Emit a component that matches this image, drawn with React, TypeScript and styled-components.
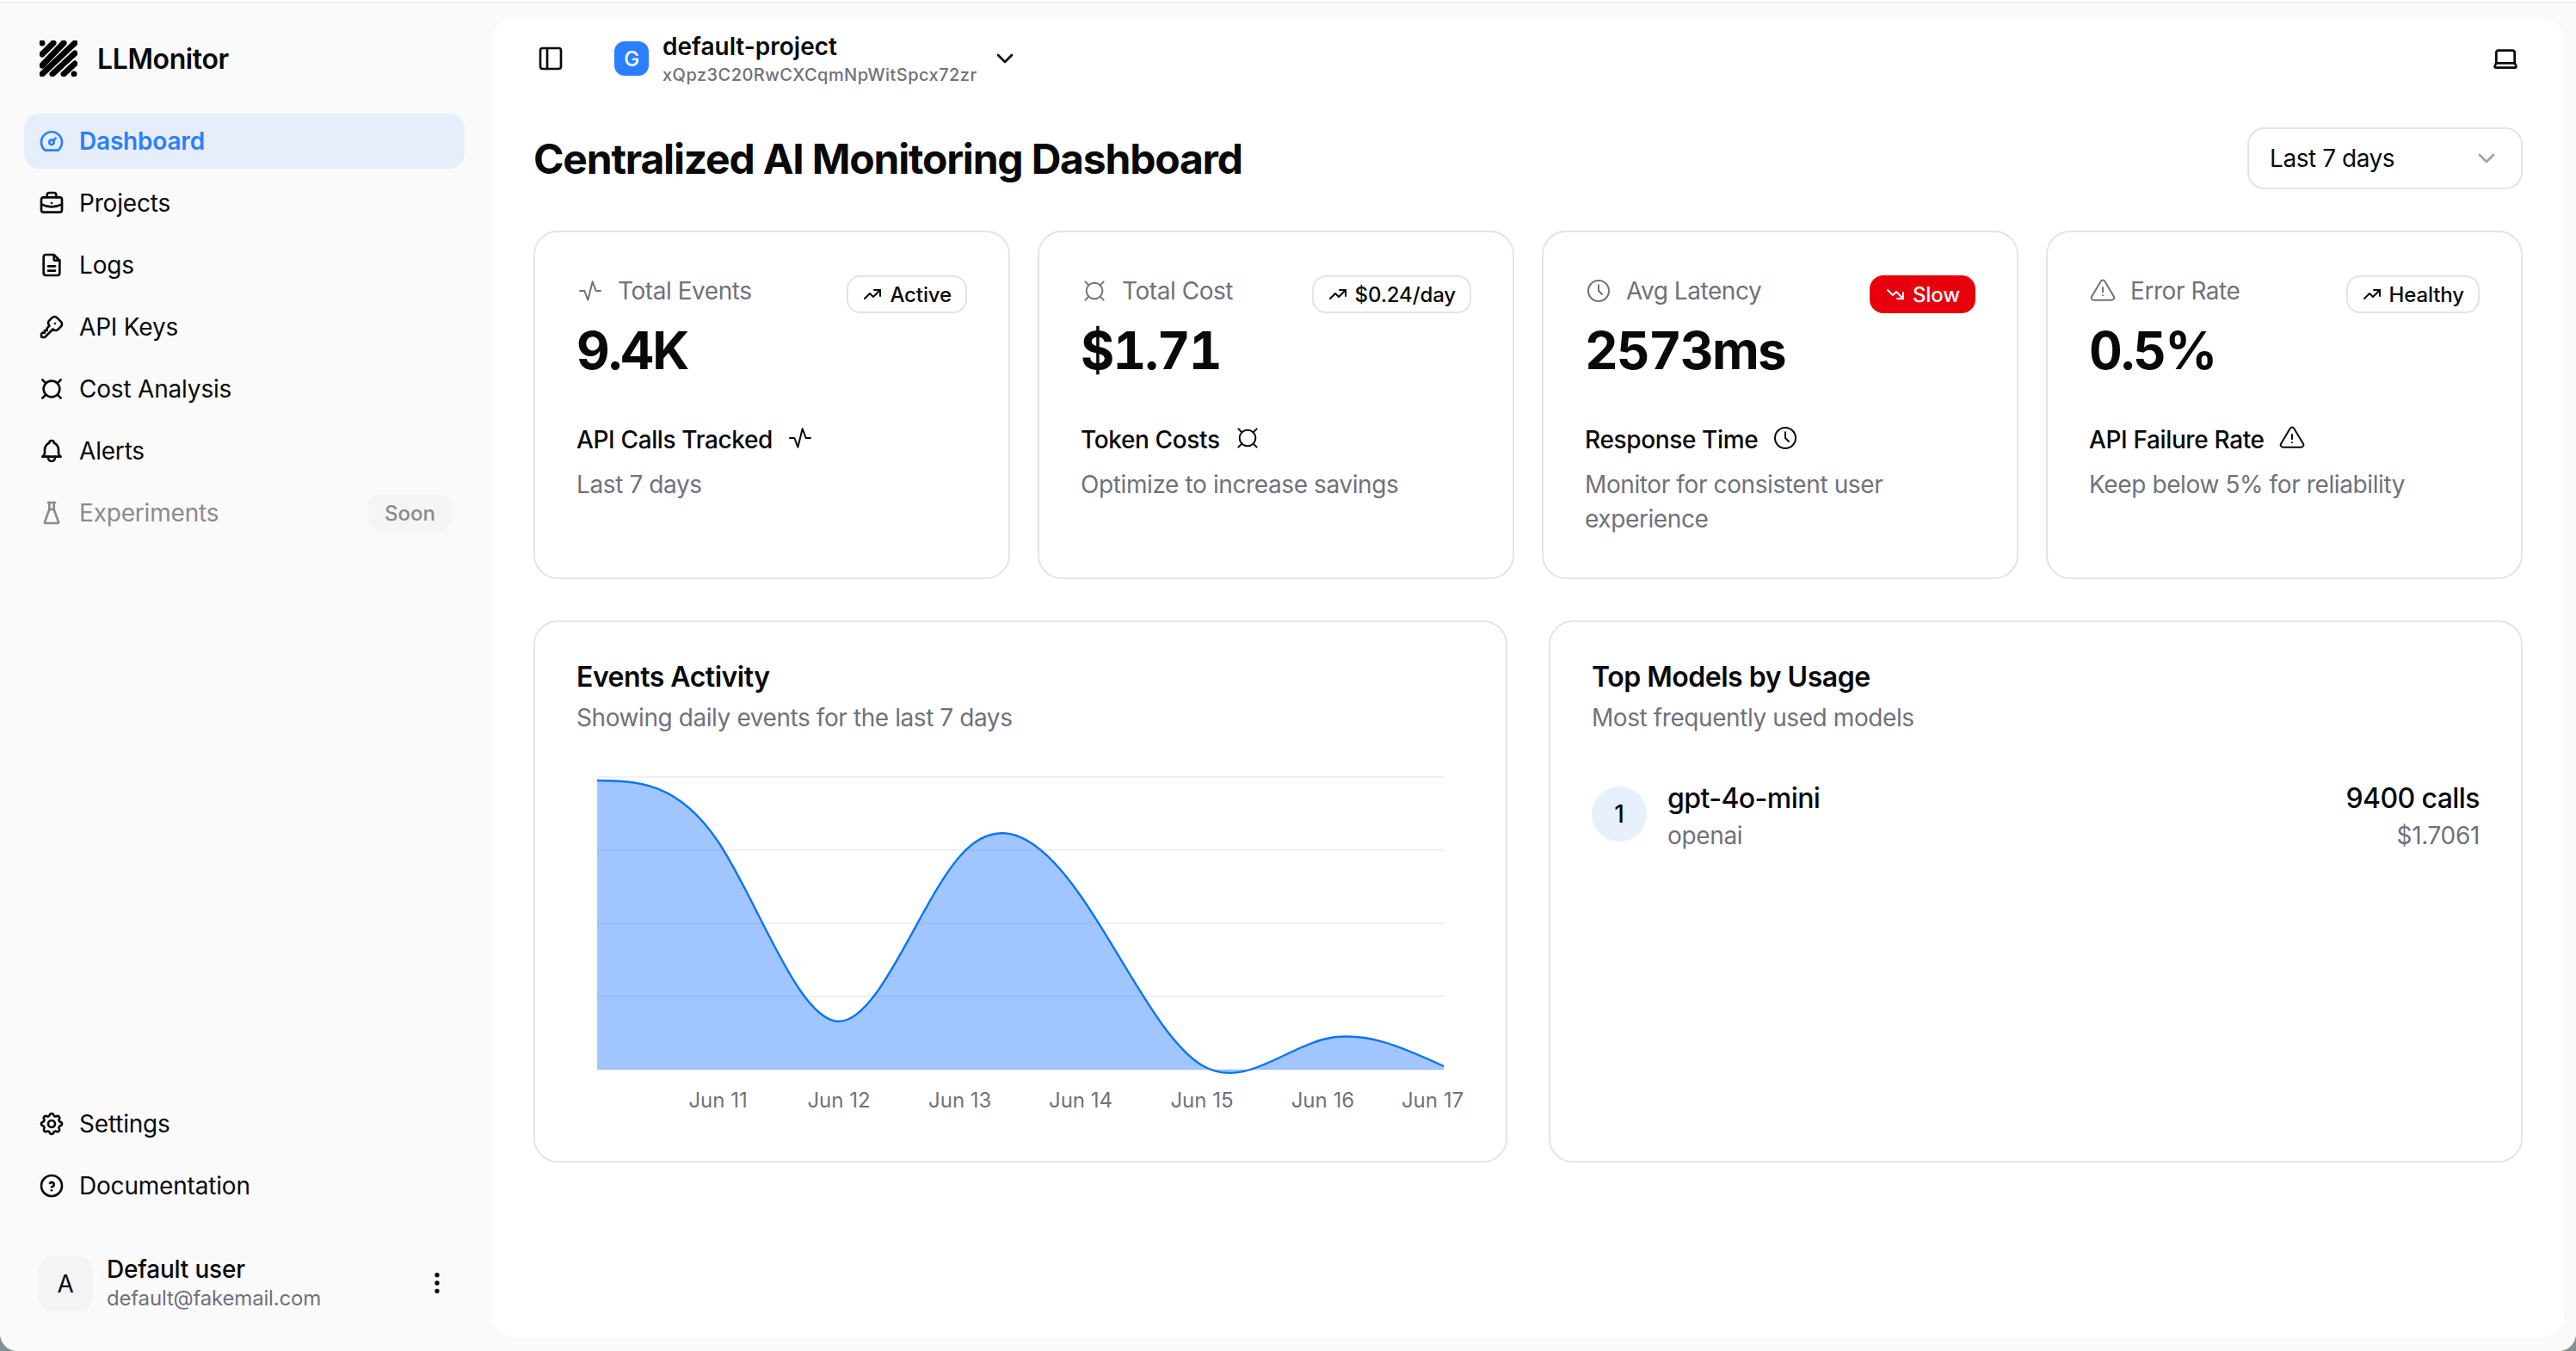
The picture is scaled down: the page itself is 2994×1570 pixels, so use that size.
import React from "react";
import styled, { createGlobalStyle } from "styled-components";
import { Laptop, PanelLeft } from "lucide-react";
import {
    TbActivity,
    TbAlertTriangle,
    TbBell,
    TbBriefcase,
    TbChevronDown,
    TbClock,
    TbCurrency,
    TbDashboard,
    TbDotsVertical,
    TbFileDescription,
    TbFlask,
    TbHelpCircle,
    TbKey,
    TbSettings,
    TbTrendingDown,
    TbTrendingUp,
} from "react-icons/tb";

const GlobalStyle = createGlobalStyle`
    * {
        box-sizing: border-box;
    }

    html, body {
        margin: 0;
        padding: 0;
        background: #7d9290;
    }

    body {
        font-family: Inter, "Liberation Sans", sans-serif;
        letter-spacing: -0.012em;
        color: #09090b;
    }
`;

const Page = styled.div`
    width: 2994px;
    height: 1570px;
    display: flex;
    flex-direction: column;
    overflow: hidden;
    background: #fafafa;
    border-radius: 0 0 20px 20px;
`;

const TopLine = styled.div`
    flex: none;
    height: 4px;
    background: #ffffff;
    border-bottom: 2px solid #efefef;
`;

const Body = styled.div`
    flex: 1;
    min-height: 0;
    display: flex;
`;

const Sidebar = styled.aside`
    flex: none;
    width: 572px;
    display: flex;
    flex-direction: column;
    padding: 0 32px 44px 28px;
`;

const Brand = styled.div`
    height: 128px;
    display: flex;
    align-items: center;
    gap: 23px;
    padding: 0 0 0 18px;
    font-size: 32px;
    font-weight: 600;
    letter-spacing: -0.012em;
`;

const Nav = styled.nav`
    display: flex;
    flex-direction: column;
    gap: 8px;
`;

const BottomNav = styled(Nav)`
    margin-top: auto;
`;

const NavItem = styled.a<{ $active?: boolean; $muted?: boolean }>`
    height: 64px;
    display: flex;
    align-items: center;
    gap: 16px;
    padding: 0 16px;
    border-radius: 18px;
    font-size: 28px;
    font-weight: ${(p) => (p.$active ? 600 : 400)};
    color: ${(p) => (p.$active ? "#2b7fff" : p.$muted ? "#8b8b8b" : "#09090b")};
    background: ${(p) => (p.$active ? "#e6eefb" : "transparent")};
`;

const SoonTag = styled.span`
    margin-left: auto;
    height: 44px;
    padding: 0 18px;
    display: flex;
    align-items: center;
    border-radius: 12px;
    background: #f5f5f5;
    font-size: 24px;
    font-weight: 500;
    letter-spacing: 0;
    color: #8b8b8b;
`;

const UserRow = styled.div`
    margin-top: 48px;
    display: flex;
    align-items: center;
    gap: 16px;
    padding: 0 16px;
`;

const UserAvatar = styled.div`
    flex: none;
    width: 64px;
    height: 64px;
    display: flex;
    align-items: center;
    justify-content: center;
    border-radius: 18px;
    background: #f4f4f5;
    font-size: 28px;
`;

const UserText = styled.div`
    flex: 1;
`;

const UserName = styled.div`
    font-size: 28px;
    line-height: 34px;
    font-weight: 500;
`;

const UserMail = styled.div`
    font-size: 24px;
    line-height: 34px;
    color: #71717a;
`;

const UserMenu = styled(TbDotsVertical)`
    margin-top: -2px;
`;

const Main = styled.main`
    flex: none;
    width: 2408px;
    height: 1534px;
    margin-top: 16px;
    padding: 0 48px;
    background: #ffffff;
    border-radius: 28px;
`;

const Header = styled.header`
    height: 96px;
    display: flex;
    align-items: center;
    padding: 0 4px;
`;

const ToggleIcon = styled(PanelLeft)`
    flex: none;
    margin-right: 58px;
`;

const ProjectBadge = styled.div`
    flex: none;
    width: 40px;
    height: 40px;
    display: flex;
    align-items: center;
    justify-content: center;
    border-radius: 12px;
    background: #2b7fff;
    color: #ffffff;
    font-size: 24px;
    font-weight: 500;
`;

const ProjectText = styled.div`
    margin: 4px 16px 0 16px;
`;

const ProjectName = styled.div`
    font-size: 28px;
    line-height: 32px;
    font-weight: 600;
    letter-spacing: 0;
`;

const ProjectKey = styled.div`
    margin-top: 2px;
    font-size: 20px;
    line-height: 30px;
    font-weight: 500;
    letter-spacing: 0.023em;
    color: #71717a;
`;

const LaptopIcon = styled(Laptop)`
    margin-left: auto;
`;

const TitleRow = styled.div`
    margin-top: 32px;
    height: 72px;
    display: flex;
    align-items: center;
    justify-content: space-between;
`;

const Title = styled.h1`
    margin: 0;
    font-size: 48px;
    font-weight: 700;
    letter-spacing: -0.025em;
`;

const RangeSelect = styled.div`
    width: 320px;
    height: 72px;
    display: flex;
    align-items: center;
    justify-content: space-between;
    padding: 0 24px;
    border: 2px solid #e4e4e7;
    border-radius: 20px;
    font-size: 28px;
    letter-spacing: -0.016em;
    color: #a1a1aa;

    span {
        color: #09090b;
    }
`;

const StatGrid = styled.div`
    margin-top: 48px;
    display: grid;
    grid-template-columns: repeat(4, 1fr);
    gap: 32px;
`;

const Card = styled.section`
    border: 2px solid #e4e4e7;
    border-radius: 28px;
    padding: 48px;
`;

const StatTop = styled.div`
    display: flex;
    align-items: flex-start;
    justify-content: space-between;
`;

const StatLabel = styled.div`
    height: 40px;
    display: flex;
    align-items: center;
    gap: 16px;
    font-size: 28px;
    letter-spacing: -0.016em;
    color: #71717a;

    svg {
        stroke-width: 1.5;
    }
`;

const Trend = styled.div<{ $danger?: boolean }>`
    height: 44px;
    margin-top: 2px;
    display: flex;
    align-items: center;
    gap: 8px;
    padding: 0 16px;
    border: 2px solid ${(p) => (p.$danger ? "#e7000b" : "#e4e4e7")};
    border-radius: 16px;
    background: ${(p) => (p.$danger ? "#e7000b" : "#ffffff")};
    color: ${(p) => (p.$danger ? "#ffffff" : "#09090b")};
    font-size: 24px;
    font-weight: 500;
    letter-spacing: -0.005em;
`;

const StatValue = styled.div`
    margin-top: 7px;
    font-size: 60px;
    line-height: 72px;
    font-weight: 700;
    letter-spacing: -0.03em;
    font-variant-numeric: tabular-nums;
`;

const StatNote = styled.div`
    margin-top: 48px;
    height: 40px;
    display: flex;
    align-items: center;
    gap: 16px;
    font-size: 28px;
    font-weight: 500;
    letter-spacing: -0.013em;

    svg {
        stroke-width: 1.5;
        margin-top: -4px;
    }
`;

const StatHint = styled.div`
    margin-top: 12px;
    font-size: 28px;
    line-height: 40px;
    letter-spacing: -0.014em;
    color: #71717a;
`;

const LowerGrid = styled.div`
    margin-top: 48px;
    display: grid;
    grid-template-columns: 1fr 1fr;
    gap: 48px;
`;

const PanelCard = styled(Card)`
    height: 630px;
    padding-top: 46px;
`;

const PanelTitle = styled.h2`
    margin: 0;
    font-size: 32px;
    line-height: 36px;
    font-weight: 600;
    letter-spacing: -0.015em;
`;

const PanelHint = styled.div`
    margin-top: 9px;
    font-size: 28px;
    line-height: 40px;
    letter-spacing: -0.015em;
    color: #71717a;
`;

const ChartBox = styled.svg`
    display: block;
    margin-top: 37px;
`;

const ChartLabel = styled.text`
    font-size: 24px;
    letter-spacing: 0;
    fill: #71717a;
    text-anchor: middle;
    dominant-baseline: central;
`;

const ModelRow = styled.div`
    margin-top: 50px;
    display: flex;
    align-items: center;
    gap: 24px;
`;

const Rank = styled.div`
    flex: none;
    width: 64px;
    height: 64px;
    margin-top: -2px;
    display: flex;
    align-items: center;
    justify-content: center;
    border-radius: 50%;
    background: #e8f0fe;
    font-size: 28px;
    font-weight: 500;
`;

const ModelText = styled.div<{ $right?: boolean }>`
    margin-left: ${(p) => (p.$right ? "auto" : "0")};
    text-align: ${(p) => (p.$right ? "right" : "left")};
`;

const ModelMain = styled.div`
    font-size: 32px;
    line-height: 48px;
    font-weight: 500;
    letter-spacing: -0.018em;
`;

const ModelSub = styled.div`
    font-size: 28px;
    line-height: 38px;
    letter-spacing: -0.012em;
    color: #71717a;
`;

type Point = [number, number];

// same maths as d3's curveNatural, solved per axis
const controlPoints = (v: number[]) => {
    const n = v.length - 1;
    const a = new Array(n).fill(0);
    const b = new Array(n).fill(0);
    const r = new Array(n).fill(0);
    a[0] = 0;
    b[0] = 2;
    r[0] = v[0] + 2 * v[1];
    for (let i = 1; i < n - 1; i++) {
        a[i] = 1;
        b[i] = 4;
        r[i] = 4 * v[i] + 2 * v[i + 1];
    }
    a[n - 1] = 2;
    b[n - 1] = 7;
    r[n - 1] = 8 * v[n - 1] + v[n];
    for (let i = 1; i < n; i++) {
        const m = a[i] / b[i - 1];
        b[i] -= m;
        r[i] -= m * r[i - 1];
    }
    a[n - 1] = r[n - 1] / b[n - 1];
    for (let i = n - 2; i >= 0; i--) {
        a[i] = (r[i] - a[i + 1]) / b[i];
    }
    b[n - 1] = (v[n] + a[n - 1]) / 2;
    for (let i = 0; i < n - 1; i++) {
        b[i] = 2 * v[i + 1] - a[i + 1];
    }
    return [a, b];
};

const naturalPath = (points: Point[]) => {
    const [ax, bx] = controlPoints(points.map((p) => p[0]));
    const [ay, by] = controlPoints(points.map((p) => p[1]));
    let d = `M${points[0][0]} ${points[0][1]}`;
    for (let i = 0; i < points.length - 1; i++) {
        d += `C${ax[i]} ${ay[i]} ${bx[i]} ${by[i]} ${points[i + 1][0]} ${points[i + 1][1]}`;
    }
    return d;
};

const chartPoints: Point[] = [
    [24, 16],
    [164.6, 87],
    [305, 296],
    [445.7, 104],
    [586, 150],
    [727, 347],
    [867.4, 317],
    [1008, 348],
];

const gridLines = [12, 97, 182, 267, 352];

const chartLabels: [string, number][] = [
    ["Jun 11", 164.6],
    ["Jun 12", 305],
    ["Jun 13", 445.7],
    ["Jun 14", 586],
    ["Jun 15", 727],
    ["Jun 16", 867.4],
    ["Jun 17", 995],
];

const stats = [
    {
        label: "Total Events",
        icon: TbActivity,
        trend: "Active",
        value: "9.4K",
        note: "API Calls Tracked",
        hint: "Last 7 days",
    },
    {
        label: "Total Cost",
        icon: TbCurrency,
        trend: "$0.24/day",
        value: "$1.71",
        note: "Token Costs",
        hint: "Optimize to increase savings",
    },
    {
        label: "Avg Latency",
        icon: TbClock,
        trend: "Slow",
        danger: true,
        value: "2573ms",
        note: "Response Time",
        hint: "Monitor for consistent user experience",
    },
    {
        label: "Error Rate",
        icon: TbAlertTriangle,
        trend: "Healthy",
        value: "0.5%",
        note: "API Failure Rate",
        hint: "Keep below 5% for reliability",
    },
];

const Logo = () => (
    <svg width="44" height="42" viewBox="0 0 44 42" fill="none" stroke="#000" strokeWidth="7" strokeLinecap="round">
        <path d="M3 3h.01M3 16L16 3M3 29L28 3M3 39L41 3M15 39L41 15M28 39L41 27M40 39h.01" />
    </svg>
);

const App = () => {
    const line = naturalPath(chartPoints);
    const area = `${line}L1008 352L24 352Z`;

    return (
        <Page>
            <GlobalStyle />
            <TopLine />
            <Body>
                <Sidebar>
                    <Brand>
                        <Logo />
                        LLMonitor
                    </Brand>
                    <Nav>
                        <NavItem $active>
                            <TbDashboard size={32} />
                            Dashboard
                        </NavItem>
                        <NavItem>
                            <TbBriefcase size={32} />
                            Projects
                        </NavItem>
                        <NavItem>
                            <TbFileDescription size={32} />
                            Logs
                        </NavItem>
                        <NavItem>
                            <TbKey size={32} />
                            API Keys
                        </NavItem>
                        <NavItem>
                            <TbCurrency size={32} />
                            Cost Analysis
                        </NavItem>
                        <NavItem>
                            <TbBell size={32} />
                            Alerts
                        </NavItem>
                        <NavItem $muted>
                            <TbFlask size={32} />
                            Experiments
                            <SoonTag>Soon</SoonTag>
                        </NavItem>
                    </Nav>
                    <BottomNav>
                        <NavItem>
                            <TbSettings size={32} />
                            Settings
                        </NavItem>
                        <NavItem>
                            <TbHelpCircle size={32} />
                            Documentation
                        </NavItem>
                    </BottomNav>
                    <UserRow>
                        <UserAvatar>A</UserAvatar>
                        <UserText>
                            <UserName>Default user</UserName>
                            <UserMail>default@fakemail.com</UserMail>
                        </UserText>
                        <UserMenu size={32} />
                    </UserRow>
                </Sidebar>

                <Main>
                    <Header>
                        <ToggleIcon size={32} />
                        <ProjectBadge>G</ProjectBadge>
                        <ProjectText>
                            <ProjectName>default-project</ProjectName>
                            <ProjectKey>xQpz3C20RwCXCqmNpWitSpcx72zr</ProjectKey>
                        </ProjectText>
                        <TbChevronDown size={32} />
                        <LaptopIcon size={32} />
                    </Header>

                    <TitleRow>
                        <Title>Centralized AI Monitoring Dashboard</Title>
                        <RangeSelect>
                            <span>Last 7 days</span>
                            <TbChevronDown size={32} />
                        </RangeSelect>
                    </TitleRow>

                    <StatGrid>
                        {stats.map((stat) => {
                            const Icon = stat.icon;
                            const TrendIcon = stat.danger ? TbTrendingDown : TbTrendingUp;
                            return (
                                <Card key={stat.label}>
                                    <StatTop>
                                        <StatLabel>
                                            <Icon size={32} />
                                            {stat.label}
                                        </StatLabel>
                                        <Trend $danger={stat.danger}>
                                            <TrendIcon size={24} />
                                            {stat.trend}
                                        </Trend>
                                    </StatTop>
                                    <StatValue>{stat.value}</StatValue>
                                    <StatNote>
                                        {stat.note}
                                        <Icon size={32} />
                                    </StatNote>
                                    <StatHint>{stat.hint}</StatHint>
                                </Card>
                            );
                        })}
                    </StatGrid>

                    <LowerGrid>
                        <PanelCard>
                            <PanelTitle>Events Activity</PanelTitle>
                            <PanelHint>Showing daily events for the last 7 days</PanelHint>
                            <ChartBox width="1032" height="411" viewBox="0 0 1032 411">
                                {gridLines.map((y) => (
                                    <line key={y} x1="24" x2="1008" y1={y} y2={y} stroke="#f0f0f0" strokeWidth="2" />
                                ))}
                                <path d={area} fill="#1570ff" fillOpacity="0.4" />
                                <path d={line} fill="none" stroke="#0a74f5" strokeWidth="2.4" />
                                {chartLabels.map(([text, x]) => (
                                    <ChartLabel key={text} x={x} y="387">
                                        {text}
                                    </ChartLabel>
                                ))}
                            </ChartBox>
                        </PanelCard>

                        <PanelCard>
                            <PanelTitle>Top Models by Usage</PanelTitle>
                            <PanelHint>Most frequently used models</PanelHint>
                            <ModelRow>
                                <Rank>1</Rank>
                                <ModelText>
                                    <ModelMain>gpt-4o-mini</ModelMain>
                                    <ModelSub>openai</ModelSub>
                                </ModelText>
                                <ModelText $right>
                                    <ModelMain>9400 calls</ModelMain>
                                    <ModelSub>$1.7061</ModelSub>
                                </ModelText>
                            </ModelRow>
                        </PanelCard>
                    </LowerGrid>
                </Main>
            </Body>
        </Page>
    );
};

export default App;
